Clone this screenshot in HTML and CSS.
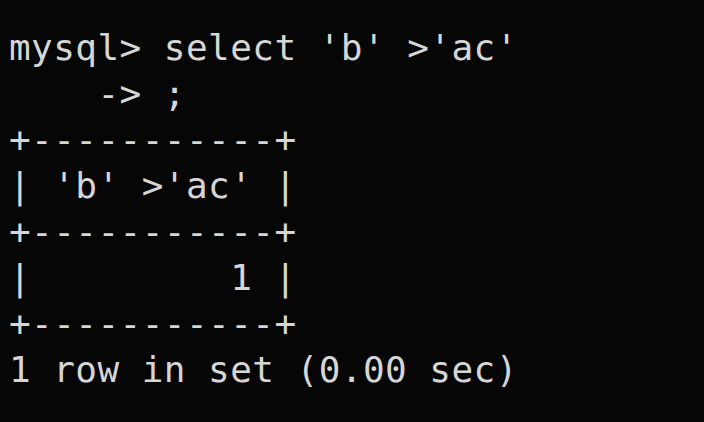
FILE: index.html
```html
<!DOCTYPE html>
<html>
<head>
<meta charset="utf-8">
<link rel="stylesheet" href="styles.css">
</head>
<body>
<pre class="terminal">mysql&gt; select 'b' &gt;'ac'
    -&gt; ;
+-----------+
| 'b' &gt;'ac' |
+-----------+
|         1 |
+-----------+
1 row in set (0.00 sec)</pre>
</body>
</html>
```
FILE: styles.css
```css
html, body {
  margin: 0;
  padding: 0;
  background: #060606;
  width: 704px;
  height: 422px;
  overflow: hidden;
}
.terminal {
  margin: 0;
  padding: 25px 0 0 9px;
  font-family: "DejaVu Sans Mono", monospace;
  font-size: 36px;
  line-height: 46px;
  letter-spacing: 0.45px;
  color: #d6d6d6;
}
```
